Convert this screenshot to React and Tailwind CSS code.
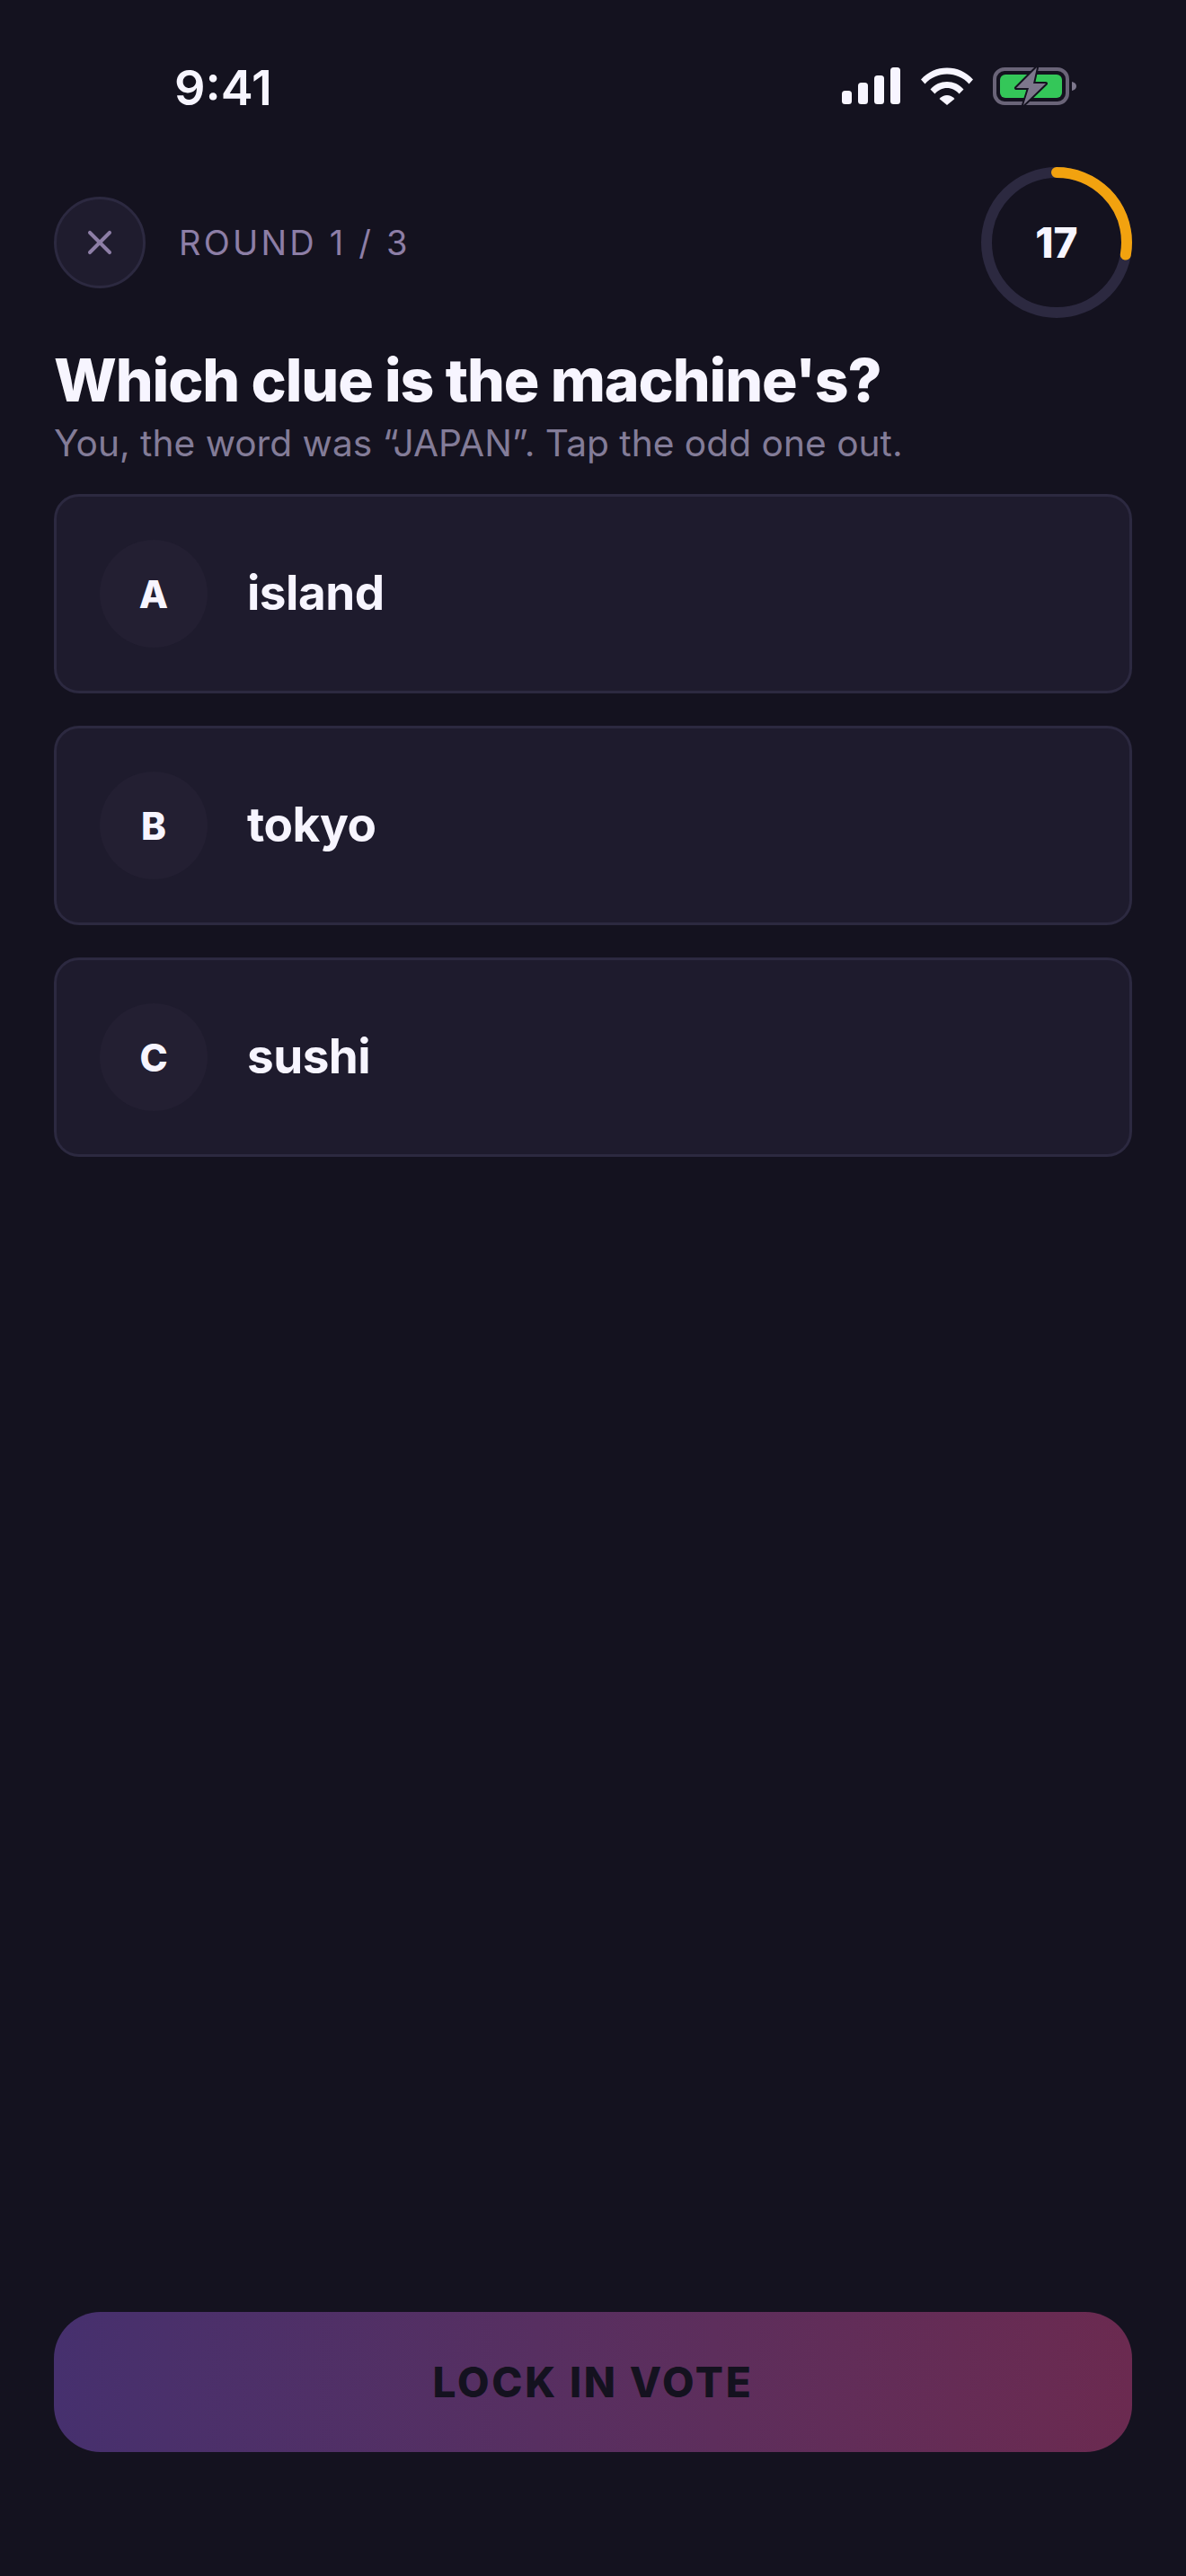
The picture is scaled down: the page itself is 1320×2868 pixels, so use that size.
import { X } from 'lucide-react';

const OPTIONS = [
  { key: 'A', label: 'island' },
  { key: 'B', label: 'tokyo' },
  { key: 'C', label: 'sushi' },
];

const StatusIcons = () => (
  <div className="flex items-center">
    <svg width="66" height="42" viewBox="0 0 66 42" fill="#f7f5ff">
      <rect x="0" y="26" width="11" height="15" rx="3.5" />
      <rect x="18" y="17" width="11" height="24" rx="3.5" />
      <rect x="36" y="9" width="11" height="32" rx="3.5" />
      <rect x="54" y="0" width="11" height="41" rx="3.5" />
    </svg>
    <svg className="ml-[22px]" width="58" height="42" viewBox="0 0 58 42" fill="#f7f5ff">
      <path d="M0 13.5C7.5 5 18 0.5 29 0.5S50.5 5 58 13.5L53.5 18.5C47.5 11.5 38.5 7.5 29 7.5S10.5 11.5 4.5 18.5Z" />
      <path d="M10.5 24.5C15.5 18.8 22 16 29 16S42.5 18.8 47.5 24.5L42.5 29.5C39 25.5 34.3 23 29 23S19 25.5 15.5 29.5Z" />
      <path d="M20.5 35C23 32.5 26 31 29 31S35 32.5 37.5 35L29 42Z" />
    </svg>
    <svg className="ml-[22px]" width="94" height="46" viewBox="0 0 94 46">
      <rect x="2" y="4" width="81" height="38" rx="11" fill="none" stroke="#6a6478" strokeWidth="4" />
      <rect x="8" y="10" width="69" height="26" rx="6" fill="#34c759" />
      <path d="M88 18C91 18.500 93 20.500 93 23S91 27.500 88 28Z" fill="#7d778c" />
      <path
        d="M49 2L26 25H40L34 44L59 20H45Z"
        fill="#7d778c"
        stroke="#14121f"
        strokeWidth="4"
        strokeLinejoin="round"
        paintOrder="stroke"
      />
    </svg>
  </div>
);

const Timer = () => (
  <div className="relative h-[168px] w-[168px]">
    <svg width="168" height="168" viewBox="0 0 168 168">
      <circle cx="84" cy="84" r="78" fill="none" stroke="#2c2940" strokeWidth="12" />
      <circle
        cx="84"
        cy="84"
        r="78"
        fill="none"
        stroke="#f2a20f"
        strokeWidth="12"
        strokeLinecap="round"
        strokeDasharray="136 490"
        transform="rotate(-90 84 84)"
      />
    </svg>
    <div className="absolute inset-0 flex items-center justify-center text-[46px] font-extrabold text-[#f7f5ff]">17</div>
  </div>
);

export default function App() {
  return (
    <div className="flex h-[2868px] w-[1320px] flex-col overflow-hidden bg-[#14121f] px-[60px] font-['Inter',sans-serif]">
      <div className="flex h-[186px] items-start justify-between pt-[66px]">
        <span className="ml-[134px] text-[54px] leading-[63px] font-semibold text-[#f7f5ff]">9:41</span>
        <div className="mt-[7px] mr-[61px]">
          <StatusIcons />
        </div>
      </div>

      <div className="flex h-[168px] items-center justify-between">
        <div className="flex items-center gap-[37px]">
          <div className="flex h-[102px] w-[102px] items-center justify-center rounded-full border-[3px] border-[#2c2940] bg-[#1f1c2e]">
            <X size={44} strokeWidth={2.2} color="#8d7ea6" />
          </div>
          <span className="text-[38px] tracking-[3.2px] text-[#8d7ea6]">ROUND 1 / 3</span>
        </div>
        <Timer />
      </div>

      <h1 className="mt-[29px] text-[66px] leading-[80px] font-extrabold tracking-[-1.1px] text-[#f7f5ff]">
        Which clue is the machine's?
      </h1>
      <p className="mt-[6px] text-[40.700px] leading-[50px] text-[#837c98]">
        You, the word was “JAPAN”. Tap the odd one out.
      </p>

      <div className="mt-[31px] flex flex-col gap-[36px]">
        {OPTIONS.map((option) => (
          <div
            key={option.key}
            className="flex h-[222px] items-center gap-[44px] rounded-[28px] border-[3px] border-[#2c2940] bg-[#1e1b2d] pl-[48px]"
          >
            <div className="flex h-[120px] w-[120px] items-center justify-center rounded-full bg-[#231f32] text-[42px] font-extrabold text-[#f7f5ff]">
              {option.key}
            </div>
            <span className="text-[53px] font-bold tracking-[-0.5px] text-[#f7f5ff]">{option.label}</span>
          </div>
        ))}
      </div>

      <button className="mt-auto mb-[138px] flex h-[156px] items-center justify-center rounded-[52px] bg-gradient-to-r from-[#46306e] to-[#6b2a50] text-[46px] font-extrabold tracking-[2.8px] text-[#14121f]">
        LOCK IN VOTE
      </button>
    </div>
  );
}
